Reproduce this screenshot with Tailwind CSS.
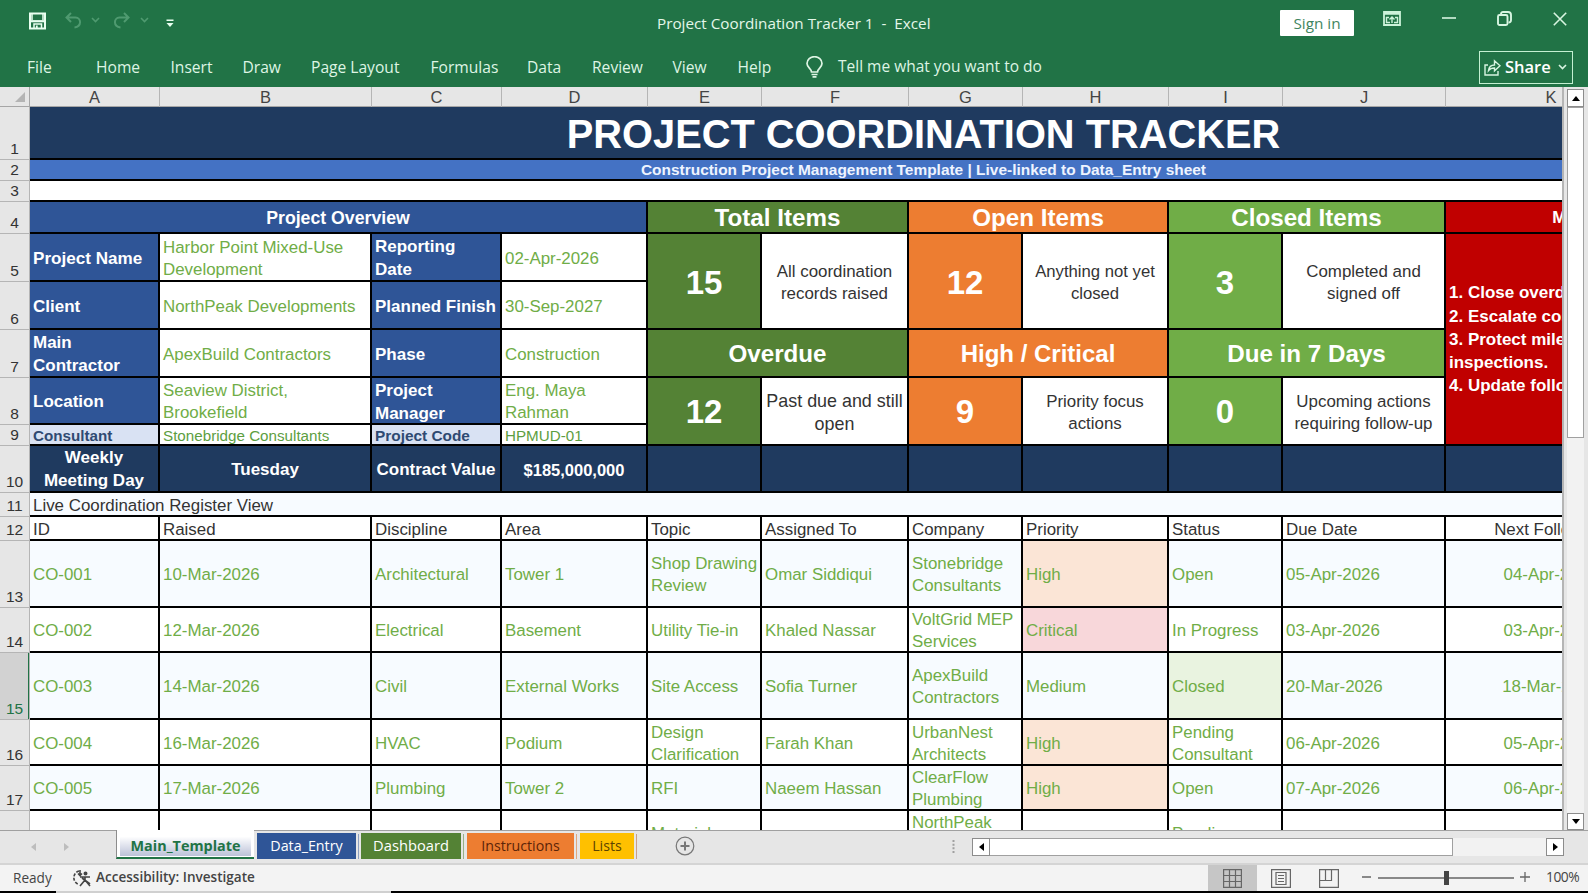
<!DOCTYPE html>
<html lang="en">
<head>
    <meta charset="UTF-8">
    <meta name="viewport" content="width=device-width, initial-scale=1.0">
    <title>Project Coordination Tracker 1 - Excel</title>
    <script src="https://cdn.jsdelivr.net/npm/@tailwindcss/browser@4"></script>
</head>
<body class="w-[1588px] h-[895px] overflow-hidden bg-white flex flex-col font-['Open_Sans','Noto_Sans',sans-serif] whitespace-nowrap">

    <!-- Title bar -->
    <header class="h-[47px] shrink-0 bg-[#217346] text-[#e4f7e9] flex items-start">
        <div class="w-[657px] pl-[29px] pt-3 flex items-start">
            <svg class="w-[17px] h-[18px]" viewBox="0 0 17 18" fill="none" stroke="#e9fff0" stroke-width="2"><path d="M1 1.500h15v15h-15z"/><path d="M2 9.200h13" stroke-width="2.200"/><path d="M3 2v6M14 2v6M5 16v-4h7.500v4" stroke-width="1.500"/><path d="M7.800 13.500v3" stroke-width="1.800"/></svg>
            <svg class="ml-[19px] w-[17px] h-[17px]" viewBox="0 0 17 17" fill="none" stroke="#4f9a70" stroke-width="2"><path d="M6 1L1.500 5.500L6 10M1.500 5.500h9c6 0.500 6.500 9 -1 10"/></svg>
            <svg class="ml-[9px] mt-[5px] w-[9px] h-[6px]" viewBox="0 0 9 6" fill="none" stroke="#4f9a70" stroke-width="1.600"><path d="M1 1l3.500 3.500L8 1"/></svg>
            <svg class="ml-[13px] w-[17px] h-[17px]" viewBox="0 0 17 17" fill="none" stroke="#4f9a70" stroke-width="2"><path d="M11 1L15.500 5.500L11 10M15.500 5.500h-9c-6 0.500 -6.500 9 1 10"/></svg>
            <svg class="ml-[10px] mt-[5px] w-[9px] h-[6px]" viewBox="0 0 9 6" fill="none" stroke="#4f9a70" stroke-width="1.600"><path d="M1 1l3.500 3.500L8 1"/></svg>
            <svg class="ml-[17px] mt-[7px] w-[8px] h-[9px]" viewBox="0 0 8 9" fill="#e9fff0"><path d="M0.500 0.500h7v1.500h-7zM0.500 4h7L4 8z"/></svg>
        </div>
        <div class="w-[623px] pt-[11px] text-[15.250px] leading-[24px] whitespace-pre">Project Coordination Tracker 1  -  Excel</div>
        <button class="mt-[10px] w-[74px] h-[26px] rounded-[1px] bg-white text-[#3f8560] text-[15.300px] leading-[26px]">Sign in</button>
        <svg class="ml-[29px] mt-[11px] w-[18px] h-[15px]" viewBox="0 0 18 15" fill="none" stroke="#cdf3da" stroke-width="1.800"><path d="M1 1h16v13H1zM1 2.800h16"/><path d="M9 12V6M6.500 8.500L9 6l2.500 2.500M3.500 6v6M14.500 6v6M3 6.500h3M12 6.500h3M3 11.500h4M11 11.500h4" stroke-width="1.400"/></svg>
        <svg class="ml-[41px] mt-[17px] w-[14px] h-[2px]" viewBox="0 0 14 2" fill="#d8f5e1"><path d="M0 0.200h14v1.600H0z"/></svg>
        <svg class="ml-[41px] mt-[11px] w-[15px] h-[15px]" viewBox="0 0 15 15" fill="none" stroke="#d8f5e1" stroke-width="1.900"><rect x="1" y="4" width="9.500" height="10" rx="1.500"/><path d="M4 3c0-1.200 1-2 2-2h5c2 0 3 1 3 3v5c0 1.500-1 2.500-2.500 2.500"/></svg>
        <svg class="ml-[41px] mt-[12px] w-[14px] h-[14px]" viewBox="0 0 14 14" fill="none" stroke="#d8f5e1" stroke-width="1.600"><path d="M0.800 0.800l12.400 12.400M13.200 0.800L0.800 13.200"/></svg>
    </header>

    <!-- Ribbon tabs -->
    <nav class="h-[40px] shrink-0 bg-[#217346] text-[#def5e4] text-[15.600px] leading-[40px] flex items-center pl-[27px]">
        <span class="w-[69px]">File</span>
        <span class="w-[74.500px]">Home</span>
        <span class="w-[72px]">Insert</span>
        <span class="w-[68.500px]">Draw</span>
        <span class="w-[119.500px]">Page Layout</span>
        <span class="w-[96.500px]">Formulas</span>
        <span class="w-[65px]">Data</span>
        <span class="w-[80.500px]">Review</span>
        <span class="w-[65px]">View</span>
        <span class="w-[68.500px]">Help</span>
        <svg class="w-[17px] h-[22px]" viewBox="0 0 17 22" fill="none" stroke="#def5e4" stroke-width="1.700"><path d="M5.500 16c0-3.500-4.500-4.500-4.500-8.500a7.500 6.800 0 0 1 15 0c0 4-4.500 5-4.500 8.500z"/><path d="M5.500 18.500h6M6.500 20.900h4"/></svg>
        <span class="ml-[15px] w-[641px] mb-0.5 text-[15.500px]">Tell me what you want to do</span>
        <button class="w-[94px] h-[33px] shrink-0 border-[1.500px] border-[#c4f0d2] flex items-center pl-1 text-white font-semibold">
            <svg class="w-[17px] h-[17px]" viewBox="0 0 17 17" fill="none" stroke="#d8f5e1" stroke-width="1.400"><path d="M4 6H1v10h13v-4"/><path d="M4.500 11.500c0.500-4 3-5.500 6-5.500V1.800l5.500 5l-5.500 5V9c-3 0-4.500 0.500-6 2.500z"/></svg>
            <span class="ml-1 w-[53px] text-left text-[16.500px]">Share</span>
            <svg class="w-[9px] h-[6px]" viewBox="0 0 9 6" fill="none" stroke="#d8f5e1" stroke-width="1.600"><path d="M1 1l3.500 3.500L8 1"/></svg>
        </button>
    </nav>

    <!-- Worksheet -->
    <main class="h-[743px] shrink-0 flex bg-[#e6e6e6] font-['Liberation_Sans',Arial,sans-serif]">
        <div class="w-[30px] shrink-0 overflow-hidden text-[15.500px] leading-[18px] text-[#333]">
            <div class="h-[20px] border-r border-b border-[#a6a6a6] flex justify-end items-end pr-1 pb-1">
                <svg class="w-[10px] h-[10px]" viewBox="0 0 10 10" fill="#b4b4b4"><path d="M10 0v10H0z"/></svg>
            </div>
            <div class="grid grid-rows-[53px_21px_21px_32px_48px_48px_48px_47px_21px_47px_24px_24px_67px_45px_67px_46px_45px_67px] *:flex *:items-end *:justify-center *:border-b *:border-r *:border-[#b5b5b5] *:pb-px">
                <div>1</div><div>2</div><div>3</div><div>4</div><div>5</div><div>6</div>
                <div>7</div><div>8</div><div>9</div><div>10</div><div>11</div><div>12</div>
                <div>13</div><div>14</div>
                <div class="bg-[#d2d2d2] text-[#217346] shadow-[inset_-1px_0_0_#217346]">15</div>
                <div>16</div><div>17</div><div></div>
            </div>
        </div>

        <div class="w-[1532px] shrink-0 overflow-hidden">
            <!-- Column letters -->
            <div class="h-[20px] w-[1789px] grid grid-cols-[130px_212px_130px_146px_114px_147px_114px_146px_114px_163px_211px_162px] text-[16.500px] leading-[20px] text-[#444] text-center border-b border-[#a6a6a6] *:border-r *:border-[#b5b5b5]">
                <div>A</div><div>B</div><div>C</div><div>D</div><div>E</div><div>F</div>
                <div>G</div><div>H</div><div>I</div><div>J</div><div>K</div><div>L</div>
            </div>

            <!-- Header block, rows 1 to 11 -->
            <div class="w-[1789px] grid grid-cols-[130px_212px_130px_146px_114px_147px_114px_146px_114px_163px_211px_162px] grid-rows-[53px_21px_21px_32px_48px_48px_48px_47px_21px_47px_24px] text-[16.900px] leading-[22px] *:flex *:items-center *:border-r-2 *:border-b-2 *:border-black *:px-[3px] *:pt-0.5">
                <div class="col-span-12 justify-center bg-[#1f3a5f] text-white font-bold text-[39.800px]">PROJECT COORDINATION TRACKER</div>
                <div class="col-span-12 justify-center bg-[#4472c4] text-[#eef4ff] font-bold text-[15.450px] pt-px!">Construction Project Management Template | Live-linked to Data_Entry sheet</div>
                <div class="col-span-12 bg-white"></div>

                <div class="col-span-4 justify-center bg-[#2f5597] text-white font-bold text-[17.700px] pt-px!">Project Overview</div>
                <div class="col-span-2 justify-center bg-[#548235] text-white font-bold text-[24.200px]">Total Items</div>
                <div class="col-span-2 justify-center bg-[#ed7d31] text-white font-bold text-[24.200px]">Open Items</div>
                <div class="col-span-2 justify-center bg-[#70ad47] text-white font-bold text-[24.200px]">Closed Items</div>
                <div class="col-span-2 justify-center bg-[#c00000] text-white font-bold text-[17px] pt-px!">Management Focus</div>

                <div class="bg-[#2f5597] text-white font-bold text-[17.100px] pt-1!">Project Name</div>
                <div class="bg-white text-[#70ad47] pt-1!"><span>Harbor Point Mixed-Use<br>Development</span></div>
                <div class="bg-[#2f5597] text-white font-bold text-[17px] leading-[23px]"><span>Reporting<br>Date</span></div>
                <div class="bg-white text-[#70ad47] pt-1!">02-Apr-2026</div>
                <div class="row-span-2 justify-center bg-[#548235] text-white font-bold text-[33px] pt-1!">15</div>
                <div class="row-span-2 justify-center bg-white text-[#333] text-center pt-1!"><span>All coordination<br>records raised</span></div>
                <div class="row-span-2 justify-center bg-[#ed7d31] text-white font-bold text-[33px] pt-1!">12</div>
                <div class="row-span-2 justify-center bg-white text-[#333] text-center text-[16.700px] pt-1!"><span>Anything not yet<br>closed</span></div>
                <div class="row-span-2 justify-center bg-[#70ad47] text-white font-bold text-[33px] pt-1!">3</div>
                <div class="row-span-2 justify-center bg-white text-[#333] text-center pt-1!"><span>Completed and<br>signed off</span></div>
                <div class="row-span-5 col-span-2 bg-[#c00000] text-white font-bold text-[17px] leading-[23.300px] pt-px!"><span>1. Close overdue<br>2. Escalate costs<br>3. Protect milestones<br>inspections.<br>4. Update follow-ups</span></div>

                <div class="bg-[#2f5597] text-white font-bold text-[17px] pt-[3px]!">Client</div>
                <div class="bg-white text-[#70ad47] pt-1!">NorthPeak Developments</div>
                <div class="bg-[#2f5597] text-white font-bold text-[17px] pt-[3px]!">Planned Finish</div>
                <div class="bg-white text-[#70ad47] pt-1!">30-Sep-2027</div>

                <div class="bg-[#2f5597] text-white font-bold text-[17px] leading-[23px]"><span>Main<br>Contractor</span></div>
                <div class="bg-white text-[#70ad47] pt-1!">ApexBuild Contractors</div>
                <div class="bg-[#2f5597] text-white font-bold text-[17px] pt-[3px]!">Phase</div>
                <div class="bg-white text-[#70ad47] pt-1!">Construction</div>
                <div class="col-span-2 justify-center bg-[#548235] text-white font-bold text-[24.200px]">Overdue</div>
                <div class="col-span-2 justify-center bg-[#ed7d31] text-white font-bold text-[24px]">High / Critical</div>
                <div class="col-span-2 justify-center bg-[#70ad47] text-white font-bold text-[24.200px]">Due in 7 Days</div>

                <div class="bg-[#2f5597] text-white font-bold text-[17px] pt-[3px]!">Location</div>
                <div class="bg-white text-[#70ad47]"><span>Seaview District,<br>Brookefield</span></div>
                <div class="bg-[#2f5597] text-white font-bold text-[17px] leading-[23px]"><span>Project<br>Manager</span></div>
                <div class="bg-white text-[#70ad47]"><span>Eng. Maya<br>Rahman</span></div>
                <div class="row-span-2 justify-center bg-[#548235] text-white font-bold text-[33px]">12</div>
                <div class="row-span-2 justify-center bg-white text-[#333] text-center text-[17.900px] leading-[23px] pt-1!"><span>Past due and still<br>open</span></div>
                <div class="row-span-2 justify-center bg-[#ed7d31] text-white font-bold text-[33px]">9</div>
                <div class="row-span-2 justify-center bg-white text-[#333] text-center pt-1!"><span>Priority focus<br>actions</span></div>
                <div class="row-span-2 justify-center bg-[#70ad47] text-white font-bold text-[33px]">0</div>
                <div class="row-span-2 justify-center bg-white text-[#333] text-center pt-1!"><span>Upcoming actions<br>requiring follow-up</span></div>

                <div class="bg-[#d9e2f3] text-[#2f4a72] font-bold text-[15.200px]">Consultant</div>
                <div class="bg-white text-[#5d9e41] text-[15.200px]">Stonebridge Consultants</div>
                <div class="bg-[#d9e2f3] text-[#2f4a72] font-bold text-[15.400px]">Project Code</div>
                <div class="bg-white text-[#5d9e41] text-[15.200px]">HPMUD-01</div>

                <div class="justify-center bg-[#1f3a5f] text-white font-bold text-[17px] leading-[23px] text-center pt-px!"><span>Weekly<br>Meeting Day</span></div>
                <div class="justify-center bg-[#1f3a5f] text-white font-bold text-[17px]">Tuesday</div>
                <div class="justify-center bg-[#1f3a5f] text-white font-bold text-[17px]">Contract Value</div>
                <div class="justify-center bg-[#1f3a5f] text-white font-bold text-[16.500px]">$185,000,000</div>
                <div class="bg-[#1f3a5f]"></div>
                <div class="bg-[#1f3a5f]"></div>
                <div class="bg-[#1f3a5f]"></div>
                <div class="bg-[#1f3a5f]"></div>
                <div class="bg-[#1f3a5f]"></div>
                <div class="bg-[#1f3a5f]"></div>
                <div class="bg-[#1f3a5f]"></div>
                <div class="bg-[#1f3a5f]"></div>

                <div class="col-span-12 bg-[#f7fbff] text-[#333] pt-1!">Live Coordination Register View</div>
            </div>

            <!-- Register, rows 12 and down -->
            <div id="register" class="w-[1627px] grid grid-cols-[130px_212px_130px_146px_114px_147px_114px_146px_114px_163px_211px] grid-rows-[24px_67px_45px_67px_46px_45px_67px] text-[16.900px] leading-[22px] *:flex *:items-center *:border-r-2 *:border-b-2 *:border-black *:px-[3px] *:pt-[3px]"></div>
        </div>

        <!-- Vertical scrollbar -->
        <div class="w-[26px] shrink-0 border-l-2 border-[#b5b5b5] pl-[3px] pt-[2px] flex flex-col">
            <div class="w-[17px] h-[18px] bg-white border border-[#8c8c8c] flex items-center justify-center">
                <svg class="w-[8px] h-[5px]" viewBox="0 0 8 5"><path d="M0 5L4 0l4 5z"/></svg>
            </div>
            <div class="w-[17px] h-[331px] bg-white border border-[#a0a0a0]"></div>
            <div class="w-[17px] grow bg-[#f2f2f2]"></div>
            <div class="w-[17px] h-[17px] bg-white border border-[#8c8c8c] flex items-center justify-center">
                <svg class="w-[8px] h-[5px]" viewBox="0 0 8 5"><path d="M0 0h8L4 5z"/></svg>
            </div>
        </div>
    </main>

    <!-- Sheet tabs -->
    <div class="h-[33px] shrink-0 bg-[#e6e6e6] border-t border-[#a0a0a0] flex items-start">
        <div class="w-[116px] h-[31px] pl-[31px] flex items-center gap-[28px]">
            <svg class="w-[5px] h-[8px]" viewBox="0 0 5 8" fill="#bdbdbd"><path d="M5 0v8L0 4z"/></svg>
            <svg class="w-[5px] h-[8px]" viewBox="0 0 5 8" fill="#bdbdbd"><path d="M0 0v8l5-4z"/></svg>
        </div>
        <div class="-mt-px w-[138px] h-[29px] bg-white border-l border-[#8c8c8c] border-b-2 border-b-[#217346] px-[3px]">
            <div class="h-[26px] bg-linear-to-b from-white from-25% to-[#bcc2d8] text-[#217346] font-bold text-[14.400px] leading-[31px] text-center">Main_Template</div>
        </div>
        <div class="ml-[3px] mt-[2px] w-[99px] h-[26px] bg-[#2f5597] text-white text-center text-[14.300px] leading-[25px]">Data_Entry</div>
        <div class="ml-[2px] mt-[3px] w-px h-[25px] bg-[#8ea0c0]"></div>
        <div class="ml-[2px] mt-[2px] w-[100px] h-[26px] bg-[#548235] text-white text-center text-[14.700px] leading-[25px]">Dashboard</div>
        <div class="ml-[2px] mt-[3px] w-px h-[25px] bg-[#98b088]"></div>
        <div class="ml-[3px] mt-[2px] w-[107px] h-[26px] bg-[#ed7d31] text-[#5b2408] text-center text-[14.200px] leading-[25px]">Instructions</div>
        <div class="ml-[2px] mt-[3px] w-px h-[25px] bg-[#e0a880]"></div>
        <div class="ml-[3px] mt-[2px] w-[54px] h-[26px] bg-[#ffc000] text-[#5c4300] text-center text-[14.200px] leading-[25px]">Lists</div>
        <div class="ml-[2px] mt-[3px] w-px h-[25px] bg-[#c9a08a]"></div>
        <svg class="ml-[38px] mt-[5px] w-[20px] h-[20px]" viewBox="0 0 20 20" fill="none" stroke="#777"><circle cx="10" cy="10" r="8.800" stroke-width="1.200"/><path d="M10 5.500v9M5.500 10h9" stroke-width="2"/></svg>
        <svg class="ml-[257px] mt-[9px] w-[3px] h-[13px]" viewBox="0 0 3 13" fill="#a0a0a0"><path d="M0.500 0h2v2h-2zM0.500 3.700h2v2h-2zM0.500 7.300h2v2h-2zM0.500 11h2v2h-2z"/></svg>
        <div class="ml-[17px] mt-[7px] flex h-[18px]">
            <div class="w-[18px] bg-white border border-[#8c8c8c] flex items-center justify-center">
                <svg class="w-[5px] h-[8px]" viewBox="0 0 5 8"><path d="M5 0v8L0 4z"/></svg>
            </div>
            <div class="w-[463px] bg-white border border-l-0 border-[#a0a0a0]"></div>
            <div class="w-[93px] bg-[#f2f2f2]"></div>
            <div class="w-[18px] bg-white border border-[#8c8c8c] flex items-center justify-center">
                <svg class="w-[5px] h-[8px]" viewBox="0 0 5 8"><path d="M0 0v8l5-4z"/></svg>
            </div>
        </div>
    </div>

    <!-- Status bar -->
    <footer class="h-[28px] shrink-0 bg-[#f3f3f3] border-t-2 border-[#d4d4d4] flex items-center pl-[13px] text-[#444]">
        <span class="w-[59px] text-[13.600px]">Ready</span>
        <svg class="w-[20px] h-[18px]" viewBox="0 0 20 18" fill="none" stroke="#444" stroke-width="1.600"><path d="M7 2A7 7 0 0 0 7 15.500" stroke-dasharray="3 1.500"/><path d="M8 1v5M6 4.500l2 2l2-2M8 8h10M13 8v3l-5 6M13 11l5 6M10 9l8 6" /><circle cx="13.500" cy="4.500" r="1.200" fill="#444"/></svg>
        <span class="ml-1 mb-0.5 w-[1112px] text-[13.550px] font-semibold">Accessibility: Investigate</span>
        <div class="w-[49px] h-[27px] bg-[#c6c6c6] flex items-center justify-center">
            <svg class="w-[19px] h-[19px]" viewBox="0 0 19 19" fill="none" stroke="#666" stroke-width="1.200"><path d="M0.600 0.600h17.800v17.800H0.600zM6.500 0.600v17.800M12.500 0.600v17.800M0.600 6.500h17.800M0.600 12.500h17.800"/></svg>
        </div>
        <svg class="ml-[14px] w-[20px] h-[19px]" viewBox="0 0 20 19" fill="none" stroke="#666" stroke-width="1.200"><path d="M0.600 0.600h18.800v17.800H0.600zM5 3.500h10v12H5zM7 6.500h6M7 9.500h6M7 12.500h6"/></svg>
        <svg class="ml-[28px] w-[20px] h-[19px]" viewBox="0 0 20 19" fill="none" stroke="#666" stroke-width="1.200"><path d="M0.600 0.600h18.800v17.800H0.600zM0.600 11.500h11.900V0.600M6.500 0.600v10.900"/></svg>
        <svg class="ml-[23px] w-[169px] h-[16px]" viewBox="0 0 169 16" fill="none" stroke="#666" stroke-width="1.300"><path d="M0 7h9M16 8h136M158 7h10M163 2v10"/><path d="M82 1h5v14h-5z" fill="#444" stroke="none"/></svg>
        <span class="ml-[15px] mb-0.5 text-[13.800px] tracking-[-0.500px]">100%</span>
    </footer>
    <div class="h-[4px] shrink-0 flex">
        <div class="w-[56px] h-[1.500px] bg-black"></div>
        <div class="w-[335px] h-[1.500px] bg-[#d0d0d0]"></div>
        <div class="grow h-[1.500px] bg-black"></div>
    </div>

    <script>
        const headings = ['ID', 'Raised', 'Discipline', 'Area', 'Topic', 'Assigned To', 'Company', 'Priority', 'Status', 'Due Date', 'Next Follow-up'];

        const items = [
            ['CO-001', '10-Mar-2026', 'Architectural', 'Tower 1', 'Shop Drawing\nReview', 'Omar Siddiqui', 'Stonebridge\nConsultants', 'High', 'Open', '05-Apr-2026', '04-Apr-2026'],
            ['CO-002', '12-Mar-2026', 'Electrical', 'Basement', 'Utility Tie-in', 'Khaled Nassar', 'VoltGrid MEP\nServices', 'Critical', 'In Progress', '03-Apr-2026', '03-Apr-2026'],
            ['CO-003', '14-Mar-2026', 'Civil', 'External Works', 'Site Access', 'Sofia Turner', 'ApexBuild\nContractors', 'Medium', 'Closed', '20-Mar-2026', '18-Mar-2026'],
            ['CO-004', '16-Mar-2026', 'HVAC', 'Podium', 'Design\nClarification', 'Farah Khan', 'UrbanNest\nArchitects', 'High', 'Pending\nConsultant', '06-Apr-2026', '05-Apr-2026'],
            ['CO-005', '17-Mar-2026', 'Plumbing', 'Tower 2', 'RFI', 'Naeem Hassan', 'ClearFlow\nPlumbing', 'High', 'Open', '07-Apr-2026', '06-Apr-2026'],
            ['', '', '', '', 'Material\n\u00a0', '', 'NorthPeak\n\u00a0\n\u00a0', '', 'Pending\n\u00a0', '', '']
        ];

        // Conditional fills for the Priority and Status columns
        const fills = { High: 'bg-[#fbe5d6]', Critical: 'bg-[#f8d7da]', Closed: 'bg-[#e9f3e0]' };
        const register = document.getElementById('register');

        function addCell(text, col, classes) {
            const cell = document.createElement('div');
            cell.className = classes + (col === 10 ? ' justify-center' : '');
            const label = document.createElement('span');
            label.className = 'whitespace-pre';
            label.textContent = text;
            cell.appendChild(label);
            register.appendChild(cell);
        }

        headings.forEach((text, col) => addCell(text, col, 'bg-white text-[#333]'));
        items.forEach((item, row) => {
            const band = row % 2 === 0 ? 'bg-[#f7fbff]' : 'bg-white';
            item.forEach((text, col) => addCell(text, col, 'text-[#70ad47] ' + (fills[text] || band)));
        });
    </script>
</body>
</html>
